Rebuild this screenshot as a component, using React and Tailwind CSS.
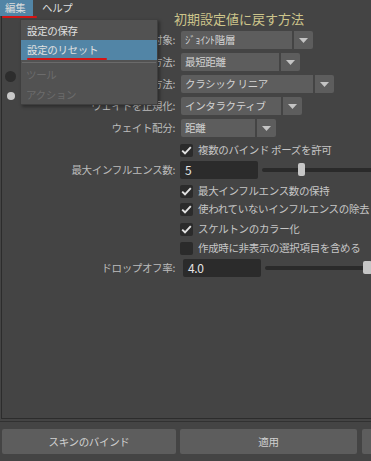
import React from 'react';

const Dropdown = ({ value, boxClass }) => (
  <div className="flex h-[18px] gap-[2px]">
    <div className={`${boxClass} bg-[#5d5d5d] rounded-l-[2px] flex items-center pl-[4px] text-[#d2d2d2] whitespace-nowrap`}>
      {value}
    </div>
    <div className="w-[19px] bg-[#5d5d5d] rounded-r-[2px] flex items-center justify-center">
      <svg width="9" height="5" viewBox="0 0 9 5">
        <path d="M0 0h9L4.5 5z" fill="#c4c4c4" />
      </svg>
    </div>
  </div>
);

const Check = ({ checked = true, label, className = '' }) => (
  <div className={`flex items-center h-[14px] ${className}`}>
    <div className="shrink-0 w-[13px] h-[13px] -ml-[1px] bg-[#2b2b2b] rounded-[2px] flex items-center justify-center">
      {checked && (
        <svg width="11" height="9" viewBox="0 0 11 9">
          <path d="M1.2 4.6 L4 7.3 L9.8 1.2" fill="none" stroke="#e2e2e2" strokeWidth="1.9" />
        </svg>
      )}
    </div>
    <span className="ml-[5px] text-[#c6c6c6] whitespace-nowrap">{label}</span>
  </div>
);

const Row = ({ label, children, className = '' }) => (
  <div className={`grid grid-cols-[173px_1fr] gap-x-[6px] items-center ${className}`}>
    <div className="text-right text-[#bcbcbc] whitespace-nowrap">{label}</div>
    <div className="flex items-center min-w-0">{children}</div>
  </div>
);

const App = () => {
  return (
    <div className="relative w-[371px] h-[461px] overflow-hidden bg-[#444444] font-['Noto_Sans_CJK_JP','Liberation_Sans',sans-serif] text-[10.5px] tracking-[-0.35px]">
      {/* menu bar */}
      <div className="flex h-[16px] items-stretch text-[#dcdcdc]">
        <div className="bg-[#5285a6] w-[33px] flex items-center pl-[5px]">編集</div>
        <div className="flex items-center pl-[9px]">ヘルプ</div>
      </div>

      {/* options frame */}
      <div className="flex flex-col ml-[1px] h-[403px] border-l border-b border-[#2c2c2c]">
        <div className="-mt-[4px] h-[14px] flex items-center pl-[172px] text-[13px] tracking-normal text-[#cdc58b] whitespace-nowrap">
          初期設定値に戻す方法
        </div>

        <div className="mt-[5px] flex flex-col gap-[4px]">
          <Row label="バインド対象:">
            <Dropdown value="ｼﾞｮｲﾝﾄ階層" boxClass="w-[111px]" />
          </Row>
          <Row label="バインド方法:">
            <Dropdown value="最短距離" boxClass="w-[98px]" />
          </Row>
          <Row label="スキニング方法:">
            <Dropdown value="クラシック リニア" boxClass="w-[132px]" />
          </Row>
          <Row label="ウェイトを正規化:">
            <Dropdown value="インタラクティブ" boxClass="w-[100px]" />
          </Row>
          <Row label="ウェイト配分:">
            <Dropdown value="距離" boxClass="w-[74px]" />
          </Row>
        </div>

        <Row label="" className="mt-[6px]">
          <Check label="複数のバインド ポーズを許可" />
        </Row>

        <Row label="最大インフルエンス数:" className="mt-[4px]">
          <div className="shrink-0 w-[78px] h-[18px] -ml-[1px] bg-[#2b2b2b] rounded-[2px] flex items-center pl-[5px] text-[12px] text-[#e4e4e4]">5</div>
          <div className="relative ml-[4px] flex-1 h-[4px] bg-[#2a2a2a] rounded-l-[2px]">
            <div className="absolute left-[36px] -top-[5px] w-[7px] h-[13px] bg-[#c6c6c6] rounded-[2px]" />
          </div>
        </Row>

        <Row label="" className="mt-[5px]">
          <Check label="最大インフルエンス数の保持" />
        </Row>
        <Row label="" className="mt-[4px]">
          <Check label="使われていないインフルエンスの除去" />
        </Row>
        <Row label="" className="mt-[6px]">
          <Check label="スケルトンのカラー化" />
        </Row>
        <Row label="" className="mt-[5px]">
          <Check checked={false} label="作成時に非表示の選択項目を含める" />
        </Row>

        <Row label="ドロップオフ率:" className="mt-[4px]">
          <div className="shrink-0 w-[78px] h-[18px] ml-[2px] bg-[#2b2b2b] rounded-[2px] flex items-center pl-[5px] text-[12px] text-[#e4e4e4]">4.0</div>
          <div className="relative ml-[4px] flex-1 h-[4px] bg-[#2a2a2a] rounded-l-[2px]">
            <div className="absolute left-[98px] -top-[5px] w-[9px] h-[13px] bg-[#c6c6c6] rounded-[2px]" />
          </div>
        </Row>
      </div>

      <div className="mt-[2px] border-t border-[#313131]" />

      {/* buttons */}
      <div className="mt-[7px] flex w-max pl-[2px] text-[#d0d0d0]">
        <button className="shrink-0 w-[174px] h-[25px] bg-[#5d5d5d] rounded-[2px]">スキンのバインド</button>
        <button className="shrink-0 ml-[4px] w-[177px] h-[25px] bg-[#5d5d5d] rounded-[2px]">適用</button>
        <button className="shrink-0 ml-[5px] w-[177px] h-[25px] bg-[#5d5d5d] rounded-[2px]" />
      </div>

      {/* open edit menu */}
      <div className="absolute left-[20px] top-[19px] w-[138px] h-[86px] bg-[#525252] border border-[#3f3f3f] shadow-[2px_2px_3px_rgba(0,0,0,0.35)] pt-[2px] text-[#e0e0e0]">
        <div className="h-[18px] flex items-center pl-[6px]">設定の保存</div>
        <div className="h-[20px] flex items-center pl-[6px] bg-[#5285a6]">設定のリセット</div>
        <div className="my-[2px] mx-[1px] h-px bg-[#6a6a6a]" />
        <div className="h-[20px] flex items-center pl-[5px] text-[#6c6c6c]">ツール</div>
        <div className="h-[20px] flex items-center pl-[5px] text-[#6c6c6c]">アクション</div>
      </div>
      <div className="absolute left-[5px] top-[71px] w-[11px] h-[11px] rounded-full bg-[#2d2d2d]" />
      <div className="absolute left-[7px] top-[92px] w-[8px] h-[8px] rounded-full bg-[#c8c8c8]" />

      {/* red annotation marks */}
      <div className="absolute left-[2px] top-[16px] w-[35px] h-[2px] bg-[#d51414] rounded-full" />
      <div className="absolute left-[27px] top-[58px] w-[80px] h-[2px] bg-[#d51414] rounded-full" />
    </div>
  );
};

export default App;
